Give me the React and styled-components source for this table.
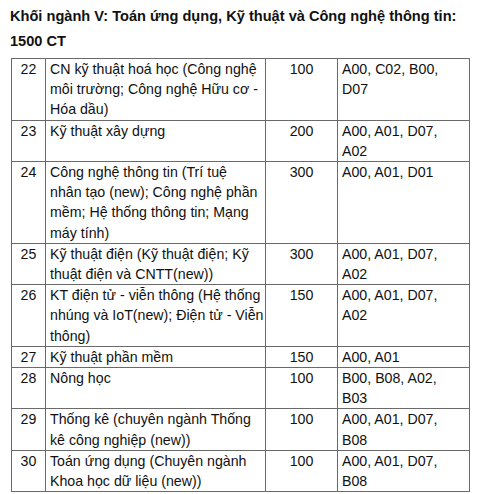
import React from "react";
import styled, { createGlobalStyle } from "styled-components";

const Global = createGlobalStyle`
  html, body { margin: 0; padding: 0; background: #ffffff; }
  body { font-family: "Liberation Sans", Arial, sans-serif; color: #111; }
`;

const Page = styled.div`
  width: 480px;
  height: 494px;
  overflow: hidden;
  padding: 4px 0 0 10px;
  box-sizing: border-box;
`;

const Title = styled.h2`
  margin: 0 0 4px 0;
  font-size: 14.6px;
  font-weight: bold;
  line-height: 25px;
  color: #111;
`;

const Table = styled.table`
  border-collapse: collapse;
  margin-left: 1px;
  table-layout: fixed;
  width: 458px;
  font-size: 14.2px;
  line-height: 20.2px;
  color: #111;
`;

const Col = styled.col`
  width: ${(p) => p.$w}px;
`;

const Cell = styled.td`
  border: 1px solid #6a6a6a;
  padding: 0 ${(p) => p.$pad || "4px"};
  vertical-align: top;
  text-align: ${(p) => p.$align || "left"};
  white-space: nowrap;
`;

const rows = [
  ["22", ["CN kỹ thuật hoá học (Công nghệ", "môi trường; Công nghệ Hữu cơ -", "Hóa dầu)"], "100", ["A00, C02, B00,", "D07"]],
  ["23", ["Kỹ thuật xây dựng"], "200", ["A00, A01, D07,", "A02"]],
  ["24", ["Công nghệ thông tin (Trí tuệ", "nhân tạo (new); Công nghệ phần", "mềm; Hệ thống thông tin; Mạng", "máy tính)"], "300", ["A00, A01, D01"]],
  ["25", ["Kỹ thuật điện (Kỹ thuật điện; Kỹ", "thuật điện và CNTT(new))"], "300", ["A00, A01, D07,", "A02"]],
  ["26", ["KT điện tử - viễn thông (Hệ thống", "nhúng và IoT(new); Điện tử - Viễn", "thông)"], "150", ["A00, A01, D07,", "A02"]],
  ["27", ["Kỹ thuật phần mềm"], "150", ["A00, A01"]],
  ["28", ["Nông học"], "100", ["B00, B08, A02,", "B03"]],
  ["29", ["Thống kê (chuyên ngành Thống", "kê công nghiệp (new))"], "100", ["A00, A01, D07,", "B08"]],
  ["30", ["Toán ứng dụng (Chuyên ngành", "Khoa học dữ liệu (new))"], "100", ["A00, A01, D07,", "B08"]],
];

const Lines = ({ lines }) =>
  lines.map((l, i) => (
    <React.Fragment key={i}>
      {i > 0 && <br />}
      {l}
    </React.Fragment>
  ));

export default function App() {
  return (
    <Page>
      <Global />
      <Title>
        Khối ngành V: Toán ứng dụng, Kỹ thuật và Công nghệ thông tin:
        <br />
        1500 CT
      </Title>
      <Table>
        <colgroup>
          <Col $w={34} />
          <Col $w={220} />
          <Col $w={72} />
          <Col $w={132} />
        </colgroup>
        <tbody>
          {rows.map(([no, name, qty, combos]) => (
            <tr key={no}>
              <Cell $align="center" $pad="2px">{no}</Cell>
              <Cell>
                <Lines lines={name} />
              </Cell>
              <Cell $align="center">{qty}</Cell>
              <Cell>
                <Lines lines={combos} />
              </Cell>
            </tr>
          ))}
        </tbody>
      </Table>
    </Page>
  );
}
